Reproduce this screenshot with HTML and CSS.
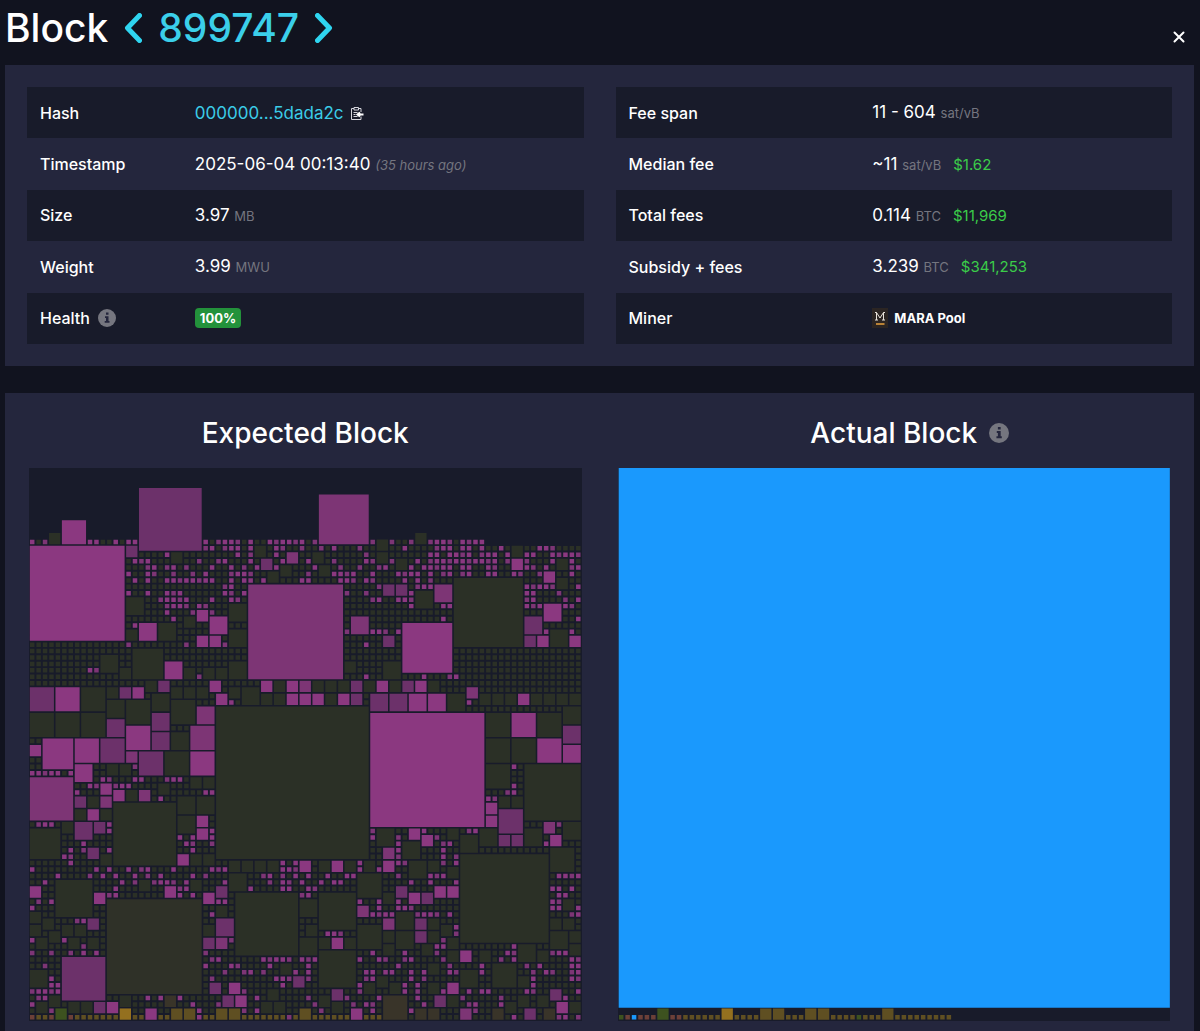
FILE: index.html
```html
<!DOCTYPE html>
<html lang="en">
<head>
<meta charset="utf-8">
<title>Block 899747</title>
<meta name="viewport" content="width=device-width, initial-scale=1">
<link rel="stylesheet" href="styles.css">
</head>
<body>
<header class="page-header">
  <h1 class="title">
    <span>Block</span>
    <a class="step" href="#prev" aria-label="Previous block"><svg viewBox="0 0 18 30" width="18" height="30"><path d="M15.500 2.500 3.500 15l12 12.500"/></svg></a>
    <a class="height" href="#block">899747</a>
    <a class="step" href="#next" aria-label="Next block"><svg viewBox="0 0 18 30" width="18" height="30"><path d="M2.500 2.500 14.500 15l-12 12.500"/></svg></a>
  </h1>
  <button class="close" type="button" aria-label="Close"><svg viewBox="0 0 12 12" width="12" height="12"><path d="M1.500 1.500l9 9M10.500 1.500l-9 9"/></svg></button>
</header>
<main>
  <section class="box details">
    <table class="facts facts-left">
      <tbody>
      <tr><th scope="row">Hash</th><td><div class="cell"><a class="hash" href="#hash">000000...5dada2c</a><button class="copy" type="button" aria-label="Copy hash"><svg viewBox="0 0 14 14" width="14" height="14"><path d="M4 2.500H1.500v11h9.500v-3M11 6V2.500H8.500M4 1.500h4.500v2.500H4z"/><path d="M3.500 6.500h4M3.500 8.500h2M3.500 10.500h4"/><path class="arrow" d="M13.500 8.500H8M10 6.500l-2.500 2 2.500 2"/></svg></button></div></td></tr>
      <tr><th scope="row">Timestamp</th><td>2025-06-04 00:13:40 <i class="unit">(35 hours ago)</i></td></tr>
      <tr><th scope="row">Size</th><td>3.97 <span class="unit">MB</span></td></tr>
      <tr><th scope="row">Weight</th><td>3.99 <span class="unit">MWU</span></td></tr>
      <tr><th scope="row"><div class="cell">Health <svg class="info" viewBox="0 0 18 18" width="18" height="18"><circle cx="9" cy="9" r="9"/><path d="M8 3.500h2.500v2.300H8zM7 7.200h3.500v4.800h1v1.700H6.700V12H8V8.900H7z"/></svg></div></th><td><div class="cell"><span class="badge">100%</span></div></td></tr>
      </tbody>
    </table>
    <table class="facts facts-right">
      <tbody>
      <tr><th scope="row">Fee span</th><td>11 - 604 <span class="unit">sat/vB</span></td></tr>
      <tr><th scope="row">Median fee</th><td>~11 <span class="unit">sat/vB</span><span class="fiat">$1.62</span></td></tr>
      <tr><th scope="row">Total fees</th><td>0.114 <span class="unit">BTC</span><span class="fiat">$11,969</span></td></tr>
      <tr><th scope="row">Subsidy + fees</th><td>3.239 <span class="unit">BTC</span><span class="fiat">$341,253</span></td></tr>
      <tr><th scope="row">Miner</th><td><a class="miner" href="#miner"><svg viewBox="0 0 16 20" width="16" height="20"><path class="tile" d="M0 0h16v20H0z"/><path class="mark" d="M4.500 12V4.500l3.500 5.500 3.500-5.500V12M3 12h3M10 12h3M3 4.500h1.500M11.500 4.500H13"/><path class="bar" d="M4 16h8.500"/></svg><span>MARA Pool</span></a></td></tr>
      </tbody>
    </table>
  </section>
  <section class="box blocks">
    <article class="block">
      <h2>Expected Block</h2>
      <svg class="map" id="expected" viewBox="0 0 86 86" role="img" aria-label="Expected block transactions"></svg>
    </article>
    <article class="block">
      <h2><span class="label">Actual Block<svg class="info hint" viewBox="0 0 18 18" width="20" height="20"><circle cx="9" cy="9" r="9"/><path d="M8 3.500h2.500v2.300H8zM7 7.200h3.500v4.800h1v1.700H6.700V12H8V8.900H7z"/></svg></span></h2>
      <svg class="map" id="actual" viewBox="0 0 86 86" role="img" aria-label="Actual block transactions"></svg>
    </article>
  </section>
</main>
<script src="blocks.js"></script>
</body>
</html>
```
FILE: styles.css
```css
* { box-sizing: border-box; }

body {
  margin: 0;
  padding: 0 6px 0 5px;
  background: #11131f;
  color: #fff;
  font: 400 17px/24px Inter, "Liberation Sans", sans-serif;
}

a { color: #3bcce8; text-decoration: none; }

button {
  padding: 0;
  border: 0;
  background: none;
  color: inherit;
  cursor: pointer;
}

svg { display: block; }

.page-header {
  display: flex;
  justify-content: space-between;
  align-items: flex-start;
  height: 65px;
}

.title {
  display: flex;
  align-items: center;
  gap: 16px;
  margin: 0;
  font-size: 39px;
  line-height: 56px;
  font-weight: 500;
}

.step svg {
  fill: none;
  stroke: #2fd5f0;
  stroke-width: 5;
  stroke-linecap: round;
  stroke-linejoin: round;
}

.height { color: #3bcfea; }

.close { margin: 31px 9px 0 0; }

.close svg {
  fill: none;
  stroke: #fff;
  stroke-width: 2;
  stroke-linecap: round;
}

.box {
  display: grid;
  grid-template-columns: 1fr 1fr;
  gap: 32px;
  padding: 22px;
  background: #24263d;
}

.facts {
  width: 100%;
  height: 257px;
  border-collapse: collapse;
  table-layout: fixed;
}

.facts tr { height: 51px; }
.facts tr:nth-child(odd) { background: #181b2a; }

.facts th,
.facts td {
  padding: 0 12px;
  text-align: left;
  font-weight: 400;
  vertical-align: middle;
  white-space: nowrap;
}

.facts th { padding-left: 13px; font-size: 16px; font-weight: 500; }
.facts-left th { width: 28%; }
.facts-right th { width: 44%; }

.cell { display: flex; align-items: center; height: 24px; }

.unit { color: #74757f; font-size: 13px; }
.fiat { margin-left: 12px; color: #3bcc49; font-size: 15px; }

.copy { margin-left: 6px; }
.copy svg { fill: none; stroke: #d5d6dc; stroke-width: 1; }
.copy .arrow { stroke: #fff; stroke-width: 2; }

.info { margin-left: 8px; fill: #75767f; }
.info path { fill: #24263d; }

.badge {
  padding: 0 5px;
  border-radius: 4px;
  background: #23923b;
  font-size: 13px;
  line-height: 20px;
  font-weight: 700;
}

.miner {
  display: flex;
  align-items: center;
  gap: 6px;
  color: #fff;
  font-size: 13px;
  font-weight: 700;
}

.miner svg { fill: none; }
.miner .tile { fill: #2b2523; }
.miner .mark { stroke: #e8e3dc; stroke-width: 1; }
.miner .bar { stroke: #b98236; stroke-width: 2; }

.blocks { margin-top: 27px; padding-bottom: 11px; }

.block { padding: 0 2px; }

.block h2 {
  margin: 0 0 16px;
  font-size: 28px;
  line-height: 37px;
  font-weight: 500;
  text-align: center;
}

.label { position: relative; }

/* The hint hangs off the heading so that the text stays centred. */
.hint {
  position: absolute;
  top: 7px;
  left: 100%;
  margin-left: 12px;
}

.map { width: 100%; background: #181b2a; }

.dark { fill: #2b3026; }
.earth { fill: #2f3128; }
.brown { fill: #393429; }
.magenta { fill: #8b3880; }
.mid { fill: #7d3575; }
.purple { fill: #6c316a; }
.olive { fill: #5f4f22; }
.gold { fill: #94701f; }
.green { fill: #3d521f; }
.blue { fill: #1a99fd; }
.rust { fill: #6c4038; }
```
FILE: blocks.js
```js
// Each entry is "column,row,size" on the 86 x 86 grid, grouped by tone.
const squares = {
  dark: `3,10,2 22,13,2 35,12,2 39,15,2 37,16,2 15,20,3 31,21,3 24,23,2 20,24,3 15,25,2 31,25,3
    16,28,5 11,29,3 54,11,2 60,10,2 54,13,2 44,13,2 57,14,2 45,15,2 75,12,2 82,14,2 82,17,2 60,19,3
    66,17,11 81,25,3 31,30,3 14,31,2 24,31,2 27,31,2 29,31,2 18,33,2 38,33,2 8,34,4 12,34,2 22,34,2
    24,34,2 26,34,2 31,34,2 33,34,3 19,35,3 36,35,2 38,35,2 12,36,3 15,36,4 22,36,4 29,37,24
    0,38,4 4,38,4 8,38,4 22,41,3 21,44,4 12,46,2 14,46,2 25,48,2 27,48,2 20,49,2 15,50,2 9,51,2
    23,51,3 26,51,3 13,52,10 7,53,2 11,53,2 23,54,3 5,55,2 0,56,5 49,30,2 55,30,3 44,33,2 46,33,2
    48,33,2 52,33,2 56,33,2 62,33,2 46,35,2 65,35,3 70,35,2 72,35,2 74,35,2 78,35,2 80,35,2 82,35,2
    84,35,2 83,37,3 71,38,4 79,38,4 71,42,4 75,42,4 71,46,4 77,46,9 73,51,2 75,51,2 83,55,3 54,56,3
    65,56,2 70,56,3 77,56,3 67,57,3 58,58,3 11,60,2 25,60,2 27,60,2 31,61,2 33,61,2 35,61,2 37,61,2
    31,63,3 17,64,2 25,64,2 4,64,6 32,66,10 29,68,2 42,67,3 0,69,2 2,70,2 0,71,2 5,71,2 7,71,2
    3,72,2 1,73,2 6,73,2 9,73,2 27,71,2 42,73,3 43,71,2 0,78,3 3,82,2 1,83,2 6,83,2 8,83,2 14,82,2
    39,77,2 37,81,2 36,83,2 38,83,2 45,61,2 49,61,2 52,61,2 51,63,4 45,66,6 59,61,3 62,61,2 65,62,2
    67,60,14 81,59,4 55,66,2 57,69,3 62,70,2 62,72,2 64,71,2 65,73,2 51,71,4 55,72,2 55,74,2 57,72,3
    45,73,2 49,73,2 45,75,6 61,74,2 65,75,2 70,75,2 76,74,3 79,75,2 83,67,2 81,70,2 83,70,2 81,72,3
    84,72,2 84,74,2 72,77,4 67,78,3 62,77,2 54,79,2 52,80,2 56,80,2 62,80,2 76,79,2 76,82,2 79,82,2
    84,83,2 65,82,2 74,83,2 47,83,2 45,82,2`,
  earth: '12,67,15',
  brown: '21,82,2 55,82,4 72,84,2 80,84,2 60,84,2 62,84,2',
  magenta: `5,8,4 0,12,15 26,22,2 28,23,3 17,24,3 26,26,2 28,26,2 75,14,2 80,16,2 80,21,3 58,24,8
    79,26,2 84,26,2 21,30,3 28,33,2 36,33,2 40,33,2 4,34,4 16,34,2 29,35,2 40,35,2 42,35,2 15,40,4
    2,42,5 7,42,4 0,43,2 25,44,4 7,46,3 11,49,2 13,50,2 9,53,2 26,54,2 26,56,2 54,33,2 60,33,2
    44,35,2 48,35,2 59,35,3 62,35,3 76,35,2 53,38,18 75,38,4 79,42,4 83,43,3 71,52,2 71,54,2
    59,56,2 61,57,2 81,57,2 23,60,2 42,61,2 0,65,2 21,65,2 10,66,2 27,66,2 12,83,2 18,84,2
    31,80,2 32,82,2 47,61,2 55,61,2 59,66,2 63,65,2 65,65,2 47,73,2 67,75,2 65,80,2 82,83,2 50,84,2`,
  mid: `40,13,2 34,18,15 45,4,8 63,18,3 50,23,3 26,37,3 25,40,4 15,44,2 0,48,7 17,50,2 11,51,2
    42,33,2 68,34,2 80,55,2 55,59,2 29,73,2 51,68,2 55,70,2 67,84,2`,
  purple: `17,3,10 15,12,2 36,14,2 55,18,2 57,18,2 77,23,3 55,26,2 77,26,2 20,33,2 0,34,4 14,34,2
    19,38,3 12,39,3 19,41,3 11,42,4 17,44,4 7,51,2 7,55,3 10,55,2 50,33,2 58,33,2 50,35,2 53,35,3
    56,35,3 83,40,3 73,53,4 73,57,2 75,57,2 9,59,2 29,65,2 9,70,2 29,70,3 27,73,2 5,76,7 10,83,2
    28,80,2 30,82,2 41,79,2 57,65,2 61,66,2 60,70,2 60,72,2 81,81,2 63,82,2 77,84,2 47,81,2`,
  green: '4,84,2',
  gold: '14,84,2',
  olive: '22,84,2 24,84,2 29,84,2 31,84,2 42,84,2'
};

// Single-cell transactions with a raised fee rate: row -> columns.
const raised = {
  11: '0 2 9 10 13 15 16 27 29 30 31 32 34 37 38 39 40 41 42 44 53 56 59 62 63 64 65 67 68 69 70',
  12: '27 28 30 31 32 34 38 39 42 45 47 51 58 63 64 65 67 68 70 73 79 80 81',
  13: '21 32 34 38 52 62 63 65 66 67 68 70 71 72 74 77 78 81 82 83 84 85',
  14: '16 17 18 26 29 30 34 39 43 47 52 53 56 60 62 63 64 65 66 67 68 69 70 71 72 74 77 81 84',
  15: '18 19 21 22 24 28 31 33 35 38 44 48 51 54 55 59 61 62 63 64 65 67 68 71 72 77 78 80 84 85',
  16: '15 18 19 22 25 27 31 32 33 34 43 47 48 49 50 53 57 58 59 60 62 64 65 67 68 71 72 75 76 79 84',
  17: '16 18 21 22 23 24 25 26 27 28 31 33 34 36 42 43 48 49 50 52 53 58 60 62',
  18: '30 31 54 60 61 62 77 78 79 80 81 85',
  19: '15 18 21 22 23 30 31 33 49 52 57 59 77 78 82',
  20: '20 21 22 23 24 28 31 32 53 54 57 58 59 77 78 83 85',
  21: '21 22 23 24 26 27 59 64 65 77 78 79 83 84',
  22: '21 25 28', 23: '22 64 85', 24: '16', 25: '49 53 54 55 57 80 84',
  27: '15 24 30 52', 31: '9 10', 32: '26 52 61 65 66', 36: '31 68', 46: '16 75',
  47: '0 1 2 3 4 6', 48: '11 12 16 17 21 22 23', 49: '9 10 13 14 15 75',
  50: '7 27 28 74 75', 51: '20 71 72', 55: '1 2 3 12 82', 56: '12 28 53 61 68 69',
  57: '23 25 28 53 57 63', 58: '8 24 25 28 57 64 65 80', 59: '6 8 12 25 57 64',
  60: '5 6 57 64 66', 61: '6 39 41 51 57 58 64 66',
  62: '0 10 12 15 17 18 22 28 29 30 39 40 41 51 54',
  63: '4 9 11 13 16 18 20 25 27 36 37 39 41 43 46 49 50 57 62 63 64 82 83 84 85',
  64: '2 14 16 19 20 21 22 24 30 37 39 40 42 45 47 48 59 62 66',
  65: '13 23 24 34 39 40 43 44 81 82 84', 66: '12 13 23 25 42 43 82 83',
  67: '1 3 29 30 51 54 57 81 82', 68: '0 54 57 58 59 81 82 85',
  69: '28 53 54 55 56 60 61 62 63 65 84 85', 70: '7 8', 71: '66', 72: '46 47 48 66',
  73: '0 5 31 64', 74: '8 63 64 75', 75: '0 3 6 8 10 27 53 58 63 74 75 81 82 83',
  76: '28 29 36 37 38 39 40 42 43 44 51 54 55 58 59 64 73 75 84 85',
  77: '2 27 31 32 37 43 57 65 70 77 79 84 85',
  78: '30 33 34 36 41 43 52 53 55 56 59 61 65 66 70 78 80 81 84 85',
  79: '3 28 38 39 40 43 52 53 59 61 78 84 85', 80: '3 4 39 51 58 60 78',
  81: '0 1 2 3 4 33 51 58 60 64 68 70 71 77 78 85', 82: '1 2 18 20 23 35 43 49 54 60 67 73 83',
  83: '0 25 29 44 50 52 53 61 68 69 73', 84: '3 26 33 35 45 53 59 69', 85: '26 40 68 75 82 83 85'
};

const actual = {
  gold: '16,84,2',
  green: '6,84,2 0,85,1 37,85,1',
  blue: '2,85,1',
  rust: '1,85,1 3,85,1 4,85,1 5,85,1 8,85,1 9,85,1',
  olive: '22,84,2 24,84,2 29,84,2 31,84,2 41,84,2'
};

const parse = list => list.trim().split(/\s+/).map(item => item.split(',').map(Number));
const box = (x, y, size) => {
  const inset = size === 1 ? 0.15 : 0.12;
  const side = size - inset * 2;
  return `M${x + inset} ${y + inset}h${side}v${side}h${-side}z`;
};

function paint(svg, tone, d) {
  const path = document.createElementNS('http://www.w3.org/2000/svg', 'path');
  path.setAttribute('class', tone);
  path.setAttribute('d', d);
  svg.append(path);
}

function drawExpected(svg) {
  const taken = new Set();
  for (const [tone, list] of Object.entries(squares)) {
    const items = parse(list);
    for (const [x, y, size] of items) {
      for (let i = 0; i < size * size; i++) taken.add((y + Math.floor(i / size)) * 86 + x + i % size);
    }
    paint(svg, tone, items.map(item => box(...item)).join(''));
  }
  const singles = { dark: '', magenta: '', mid: '', olive: '', rust: '' };
  for (let y = 11; y < 86; y++) {
    const lit = new Set((raised[y] || '').split(' ').filter(Boolean).map(Number));
    for (let x = 0; x < (y === 11 ? 71 : 86); x++) {
      if (taken.has(y * 86 + x)) continue;
      let tone = 'dark';
      if (lit.has(x)) tone = (x * 7 + y * 5) % 3 ? 'magenta' : 'mid';
      else if (y === 85 && x < 55) tone = x < 8 && x % 3 === 0 ? 'rust' : 'olive';
      singles[tone] += box(x, y, 1);
    }
  }
  for (const [tone, d] of Object.entries(singles)) paint(svg, tone, d);
}

function drawActual(svg) {
  paint(svg, 'blue', 'M.1 0h85.800v84H.1z');
  const taken = new Set();
  for (const [tone, list] of Object.entries(actual)) {
    const items = parse(list);
    for (const [x, , size] of items) for (let i = 0; i < size; i++) taken.add(x + i);
    paint(svg, tone, items.map(item => box(...item)).join(''));
  }
  let rest = '';
  for (let x = 0; x < 52; x++) if (!taken.has(x)) rest += box(x, 85, 1);
  paint(svg, 'olive', rest);
}

drawExpected(document.getElementById('expected'));
drawActual(document.getElementById('actual'));
```
